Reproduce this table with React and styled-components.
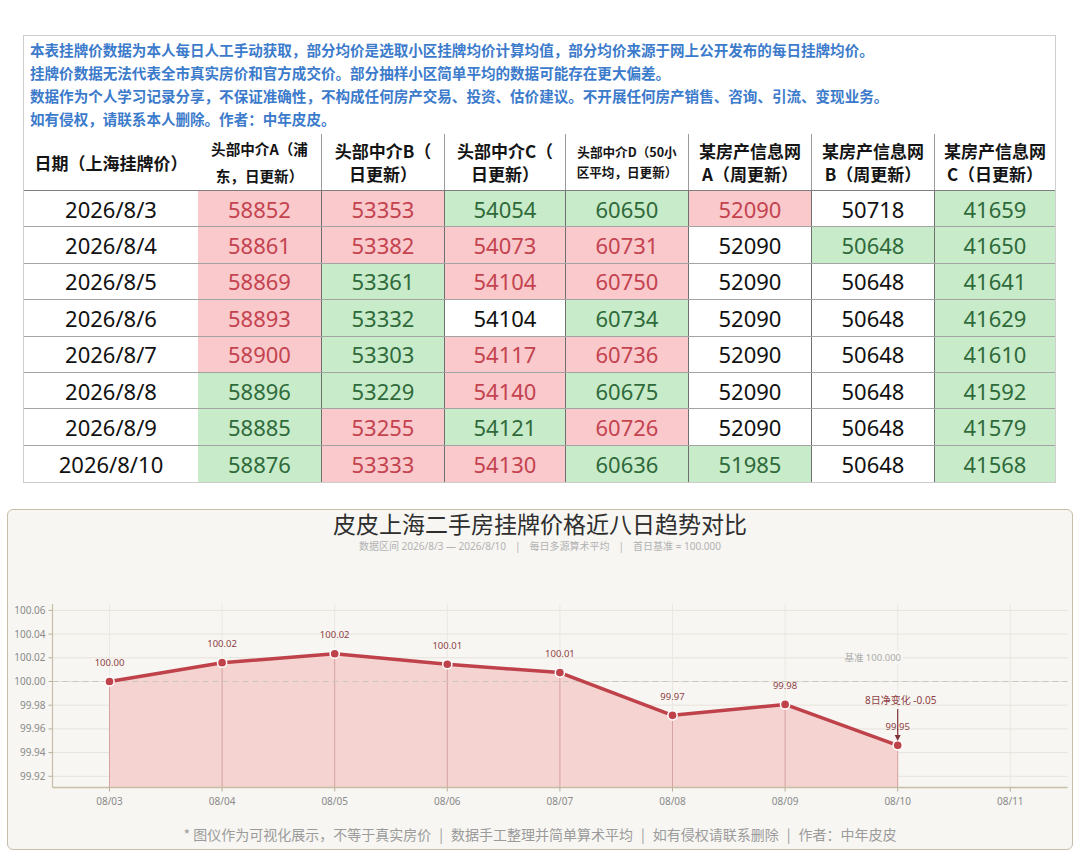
import React from 'react'
import styled, { createGlobalStyle } from 'styled-components'

const GlobalStyle = createGlobalStyle`
  body {
    margin: 0;
    background: #fff;
    font-family: "Noto Sans", "Noto Sans CJK SC", sans-serif;
  }
`

const notes = [
  '本表挂牌价数据为本人每日人工手动获取，部分均价是选取小区挂牌均价计算均值，部分均价来源于网上公开发布的每日挂牌均价。',
  '挂牌价数据无法代表全市真实房价和官方成交价。部分抽样小区简单平均的数据可能存在更大偏差。',
  '数据作为个人学习记录分享，不保证准确性，不构成任何房产交易、投资、估价建议。不开展任何房产销售、咨询、引流、变现业务。',
  '如有侵权，请联系本人删除。作者：中年皮皮。',
]

const columns = [
  { lines: ['日期（上海挂牌价）'], size: 'lg' },
  { lines: ['头部中介A（浦', '东，日更新）'], size: 'md' },
  { lines: ['头部中介B（', '日更新）'], size: 'lg' },
  { lines: ['头部中介C（', '日更新）'], size: 'lg' },
  { lines: ['头部中介D（50小', '区平均，日更新）'], size: 'sm' },
  { lines: ['某房产信息网', 'A（周更新）'], size: 'lg' },
  { lines: ['某房产信息网', 'B（周更新）'], size: 'lg' },
  { lines: ['某房产信息网', 'C（日更新）'], size: 'lg' },
]

// marks: r = up (red), g = down (green), w = unchanged
const rows = [
  { date: '2026/8/3', values: [58852, 53353, 54054, 60650, 52090, 50718, 41659], marks: 'rrggrwg' },
  { date: '2026/8/4', values: [58861, 53382, 54073, 60731, 52090, 50648, 41650], marks: 'rrrrwgg' },
  { date: '2026/8/5', values: [58869, 53361, 54104, 60750, 52090, 50648, 41641], marks: 'rgrrwwg' },
  { date: '2026/8/6', values: [58893, 53332, 54104, 60734, 52090, 50648, 41629], marks: 'rgwgwwg' },
  { date: '2026/8/7', values: [58900, 53303, 54117, 60736, 52090, 50648, 41610], marks: 'rgrrwwg' },
  { date: '2026/8/8', values: [58896, 53229, 54140, 60675, 52090, 50648, 41592], marks: 'ggrgwwg' },
  { date: '2026/8/9', values: [58885, 53255, 54121, 60726, 52090, 50648, 41579], marks: 'grgrwwg' },
  { date: '2026/8/10', values: [58876, 53333, 54130, 60636, 51985, 50648, 41568], marks: 'grrggwg' },
]

const tones = {
  r: { bg: '#f9c9cc', fg: '#c4434f' },
  g: { bg: '#c8ebc9', fg: '#2f6a3b' },
  w: { bg: '#fff', fg: '#111' },
}

const headerSizes = { lg: '17px', md: '14.6px', sm: '12.6px' }
const headerLeading = { lg: '23px', md: '27px', sm: '20px' }

const grid = '174px 124px 123px 121px 123px 123px 123px 120px'

// chart geometry (svg coordinates)
const X = (i) => 100.5 + i * 112.6
const Y = (v) => 127.5 - (v - 100) * 1185
const AXIS_Y = 233.5
const AXIS_X = 43.5
const RIGHT_X = 1058.5

const totals = rows.map((r) => r.values.reduce((a, b) => a + b, 0))
const series = totals.map((t) => (t / totals[0]) * 100)
const days = ['08/03', '08/04', '08/05', '08/06', '08/07', '08/08', '08/09', '08/10', '08/11']
const yTicks = [100.06, 100.04, 100.02, 100.0, 99.98, 99.96, 99.94, 99.92]

const Sheet = styled.div`
  box-sizing: border-box;
  width: 1033px;
  margin: 35px 0 0 23px;
  border: 1px solid #cdcdcd;
`

const Notes = styled.div`
  padding: 2px 6px 4px;
  font-family: "Noto Sans CJK SC", sans-serif;
  font-size: 14.55px;
  line-height: 23px;
  font-weight: 600;
  color: #3c7bcb;
  white-space: nowrap;
`

const HeadRow = styled.div`
  display: grid;
  grid-template-columns: ${grid};
  height: 57px;
  border-bottom: 1px solid #7d7d7d;
  box-sizing: border-box;
`

const HeadCell = styled.div`
  display: flex;
  flex-direction: column;
  align-items: center;
  justify-content: center;
  text-align: center;
  font-family: "Noto Sans CJK SC", sans-serif;
  font-weight: 700;
  color: #141414;
  font-size: ${(p) => headerSizes[p.$size]};
  line-height: ${(p) => headerLeading[p.$size]};
  white-space: nowrap;
  border-right: ${(p) => (p.$line ? '1px solid #9a9a9a' : 'none')};
`

const Row = styled.div`
  display: grid;
  grid-template-columns: ${grid};
  height: 36.4px;
  box-sizing: border-box;
  border-bottom: ${(p) => (p.$last ? 'none' : '1px solid #a3a3a3')};
`

const Cell = styled.div`
  display: flex;
  align-items: center;
  justify-content: center;
  font-size: 22px;
  background: ${(p) => tones[p.$tone].bg};
  color: ${(p) => tones[p.$tone].fg};
  border-right: ${(p) => (p.$line ? '1px solid #6f6f6f' : 'none')};
`

const Panel = styled.div`
  box-sizing: border-box;
  width: 1066px;
  margin: 26px 0 6px 7px;
  border: 1.5px solid #c5bea9;
  border-radius: 6px;
  background: #f7f6f2;
  display: flex;
  flex-direction: column;
  align-items: center;
`

const Title = styled.div`
  font-family: "Noto Sans CJK SC", sans-serif;
  font-size: 23px;
  line-height: 26px;
  color: #2e2e2e;
`

const Subtitle = styled.div`
  margin-top: 3px;
  font-size: 10px;
  line-height: 15px;
  color: #b2b2b2;
  display: flex;
  align-items: center;
`

const Sep = styled.span`
  margin: 0 ${(p) => p.$gap || 9}px;
`

const Plot = styled.svg`
  display: block;
  width: 1063px;
  height: 260px;
  font-family: "Noto Sans", "Noto Sans CJK SC", sans-serif;
`

const Footer = styled.div`
  margin: 10px 0 5px;
  font-family: "Noto Sans CJK SC", sans-serif;
  font-size: 14px;
  line-height: 20px;
  color: #9b9b9b;
`

const TrendChart = () => {
  const pts = series.map((v, i) => [X(i), Y(v)])
  const line = pts.map(([x, y], i) => `${i ? 'L' : 'M'}${x},${y}`).join(' ')
  const last = pts[pts.length - 1]
  const area = `M${pts[0][0]},${AXIS_Y} ${pts.map(([x, y]) => `L${x},${y}`).join(' ')} L${last[0]},${AXIS_Y} Z`

  return (
    <Plot viewBox='0 0 1063 260'>
      {/* grid */}
      {yTicks.map((t) => (
        <line key={t} x1={AXIS_X} x2={RIGHT_X} y1={Y(t)} y2={Y(t)} stroke='#e7e3db' strokeWidth='1' />
      ))}
      {days.map((d, i) => (
        <line key={d} x1={X(i)} x2={X(i)} y1={50} y2={AXIS_Y} stroke='#ece8e1' strokeWidth='1' />
      ))}

      <path d={area} fill='#f4d3d0' />
      {pts.map(([x, y], i) => (
        <line key={i} x1={x} x2={x} y1={y} y2={AXIS_Y} stroke='#d6a2a2' strokeWidth='1' />
      ))}

      {/* baseline */}
      <line x1={AXIS_X} x2={RIGHT_X} y1={Y(100)} y2={Y(100)} stroke='#ccc6bd' strokeWidth='1.2' strokeDasharray='6 4' />
      <rect x='836' y='97' width='58' height='13' fill='#f7f6f2' />
      <text x='892' y='107' textAnchor='end' fontSize='9.5' fill='#ababab'>基准 100.000</text>

      {/* axes */}
      <line x1={AXIS_X} x2={AXIS_X} y1={50} y2={AXIS_Y} stroke='#c8bea6' strokeWidth='1.2' />
      <line x1={AXIS_X} x2={RIGHT_X} y1={AXIS_Y} y2={AXIS_Y} stroke='#c8bea6' strokeWidth='1.5' />
      {yTicks.map((t) => (
        <g key={t}>
          <line x1={AXIS_X - 4} x2={AXIS_X} y1={Y(t)} y2={Y(t)} stroke='#b9b09b' />
          <text x={AXIS_X - 7} y={Y(t) + 3.5} textAnchor='end' fontSize='10' fill='#8a8a8a'>
            {t.toFixed(2)}
          </text>
        </g>
      ))}
      {days.map((d, i) => (
        <g key={d}>
          <line x1={X(i)} x2={X(i)} y1={AXIS_Y} y2={AXIS_Y + 4} stroke='#b9b09b' />
          <text x={X(i)} y={AXIS_Y + 17} textAnchor='middle' fontSize='10' fill='#8a8a8a'>
            {d}
          </text>
        </g>
      ))}

      {/* series */}
      <path d={line} fill='none' stroke='#bf424b' strokeWidth='3.5' strokeLinejoin='round' strokeLinecap='round' />
      {pts.map(([x, y], i) => (
        <circle key={i} cx={x} cy={y} r='4.6' fill='#bf424b' stroke='#fff' strokeWidth='1.5' />
      ))}
      {pts.map(([x, y], i) => (
        <text key={i} x={x} y={y - 15.5} textAnchor='middle' fontSize='9.5' fill='#8e3f45'>
          {series[i].toFixed(2)}
        </text>
      ))}

      {/* net change note */}
      <text x={last[0] + 3} y={150} textAnchor='middle' fontSize='10' fill='#8e3f45'>
        8日净变化 -0.05
      </text>
      <line x1={last[0]} x2={last[0]} y1={155} y2={183} stroke='#7e3439' strokeWidth='1.2' />
      <path d={`M${last[0] - 3},${181} L${last[0] + 3},${181} L${last[0]},${187} Z`} fill='#7e3439' />
    </Plot>
  )
}

const App = () => {
  return (
    <>
      <GlobalStyle />
      <Sheet>
        <Notes>
          {notes.map((n) => (
            <div key={n}>{n}</div>
          ))}
        </Notes>
        <HeadRow>
          {columns.map((c, i) => (
            <HeadCell key={i} $size={c.size} $line={i > 0 && i < columns.length - 1}>
              {c.lines.map((l) => (
                <span key={l}>{l}</span>
              ))}
            </HeadCell>
          ))}
        </HeadRow>
        {rows.map((r, ri) => (
          <Row key={r.date} $last={ri === rows.length - 1}>
            <Cell $tone='w'>{r.date}</Cell>
            {r.values.map((v, i) => (
              <Cell key={i} $tone={r.marks[i]} $line={i < r.values.length - 1}>
                {v}
              </Cell>
            ))}
          </Row>
        ))}
      </Sheet>

      <Panel>
        <Title>皮皮上海二手房挂牌价格近八日趋势对比</Title>
        <Subtitle>
          数据区间 2026/8/3 — 2026/8/10
          <Sep>|</Sep>
          每日多源算术平均
          <Sep>|</Sep>
          首日基准 = 100.000
        </Subtitle>
        <TrendChart />
        <Footer>
          * 图仪作为可视化展示，不等于真实房价
          <Sep $gap={8}>|</Sep>
          数据手工整理并简单算术平均
          <Sep $gap={8}>|</Sep>
          如有侵权请联系删除
          <Sep $gap={8}>|</Sep>
          作者：中年皮皮
        </Footer>
      </Panel>
    </>
  )
}

export default App
